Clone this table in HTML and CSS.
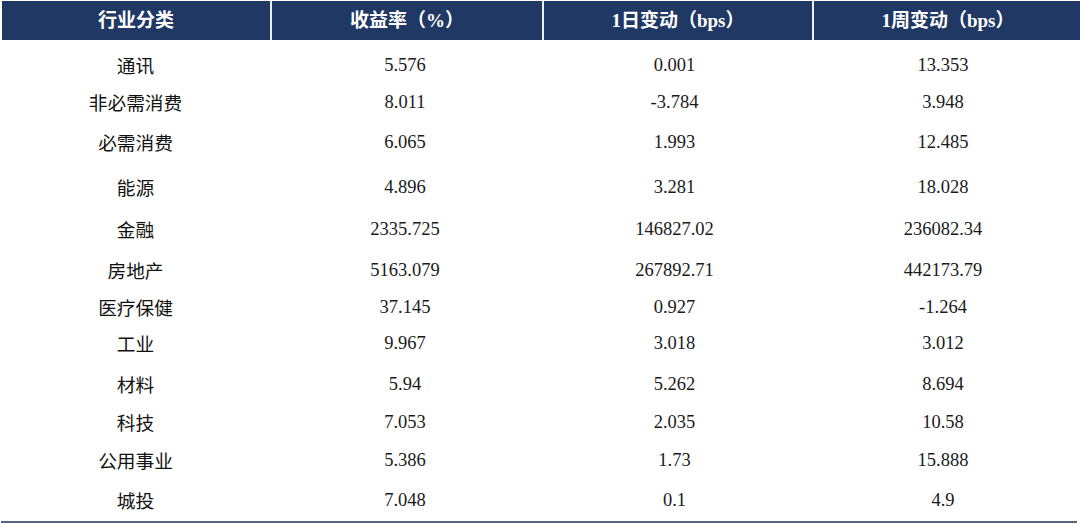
FILE: index.html
```html
<!DOCTYPE html>
<html lang="zh">
<head>
<meta charset="utf-8">
<link rel="stylesheet" href="styles.css">
</head>
<body>
<div class="table">
  <div class="head">
    <div class="hc">行业分类</div>
    <div class="hc">收益率（%）</div>
    <div class="hc">1日变动（bps）</div>
    <div class="hc">1周变动（bps）</div>
  </div>
  <div class="body">
    <div class="row h37"><div class="name">通讯</div><div class="num">5.576</div><div class="num">0.001</div><div class="num">13.353</div></div>
    <div class="row h40"><div class="name">非必需消费</div><div class="num">8.011</div><div class="num">-3.784</div><div class="num">3.948</div></div>
    <div class="row h45"><div class="name">必需消费</div><div class="num">6.065</div><div class="num">1.993</div><div class="num">12.485</div></div>
    <div class="row h42"><div class="name">能源</div><div class="num">4.896</div><div class="num">3.281</div><div class="num">18.028</div></div>
    <div class="row h41"><div class="name">金融</div><div class="num">2335.725</div><div class="num">146827.02</div><div class="num">236082.34</div></div>
    <div class="row h37"><div class="name">房地产</div><div class="num">5163.079</div><div class="num">267892.71</div><div class="num">442173.79</div></div>
    <div class="row h36"><div class="name">医疗保健</div><div class="num">37.145</div><div class="num">0.927</div><div class="num">-1.264</div></div>
    <div class="row h41"><div class="name">工业</div><div class="num">9.967</div><div class="num">3.018</div><div class="num">3.012</div></div>
    <div class="row h38"><div class="name">材料</div><div class="num">5.94</div><div class="num">5.262</div><div class="num">8.694</div></div>
    <div class="row h38"><div class="name">科技</div><div class="num">7.053</div><div class="num">2.035</div><div class="num">10.58</div></div>
    <div class="row h40"><div class="name">公用事业</div><div class="num">5.386</div><div class="num">1.73</div><div class="num">15.888</div></div>
    <div class="row h40"><div class="name">城投</div><div class="num">7.048</div><div class="num">0.1</div><div class="num">4.9</div></div>
  </div>
</div>
</body>
</html>
```
FILE: styles.css
```css
html, body {
  margin: 0;
  padding: 0;
  background: #ffffff;
}
.table {
  width: 1076px;
  margin-left: 1px;
  padding-top: 1px;
}
.head {
  display: grid;
  grid-template-columns: 268px 270px 268px 268px;
  column-gap: 2px;
  background: #e8eef6;
  width: 1074px;
  margin-left: 1px;
}
.hc {
  background: #1f3864;
  color: #ffffff;
  height: 39px;
  line-height: 39px;
  text-align: center;
  font-family: "Liberation Serif", "Noto Sans CJK SC", serif;
  font-weight: bold;
  font-size: 19px;
}
.body {
  padding-top: 6px;
  border-bottom: 2px solid #56657d;
}
.row {
  display: grid;
  grid-template-columns: 269px 270px 269px 268px;
  line-height: 38px;
}
.h36 { height: 36px; }
.h37 { height: 37px; }
.h38 { height: 38px; }
.h40 { height: 40px; }
.h41 { height: 41px; }
.h42 { height: 42px; }
.h45 { height: 45px; }
.name {
  text-align: center;
  font-family: "Noto Sans CJK SC", sans-serif;
  font-size: 18.7px;
  color: #111111;
}
.num {
  text-align: center;
  font-family: "Liberation Serif", serif;
  font-size: 18.5px;
  color: #1a1a1a;
}
```
